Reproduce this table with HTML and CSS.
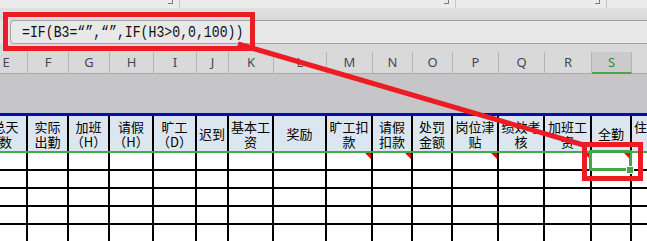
FILE: index.html
```html
<!DOCTYPE html>
<html lang="zh-CN">
<head>
<meta charset="utf-8">
<title>Sheet</title>
<link rel="stylesheet" href="styles.css">
</head>
<body>
<div class="app">
  <div class="toolbar">
    <span class="tb-mark m1"></span><span class="tb-sep"></span>
    <span class="tb-mark m2"></span><span class="tb-sep"></span>
    <span class="tb-mark m3"></span><span class="tb-sep"></span>
  </div>
  <div class="band"></div>
  <div class="fbar">
    <div class="finput"><span class="ftext">=IF(B3=“”,“”,IF(H3&gt;0,0,100))</span></div>
  </div>
  <div class="colhead-wrap">
    <div class="colhead">
      <div class="cl">E</div><div class="cl">F</div><div class="cl">G</div><div class="cl">H</div>
      <div class="cl">I</div><div class="cl">J</div><div class="cl">K</div><div class="cl">L</div>
      <div class="cl">M</div><div class="cl">N</div><div class="cl">O</div><div class="cl">P</div>
      <div class="cl">Q</div><div class="cl">R</div><div class="cl cl-active">S</div><div class="cl">T</div>
    </div>
  </div>
  <div class="graysp"></div>
  <div class="blue"></div>
  <div class="grid head">
    <div class="hc">总天<br>数</div>
    <div class="hc">实际<br>出勤</div>
    <div class="hc">加班<br>（H）</div>
    <div class="hc">请假<br>（H）</div>
    <div class="hc">旷工<br>（D）</div>
    <div class="hc">迟到</div>
    <div class="hc">基本工<br>资</div>
    <div class="hc">奖励</div>
    <div class="hc">旷工扣<br>款</div>
    <div class="hc">请假<br>扣款</div>
    <div class="hc">处罚<br>金额</div>
    <div class="hc">岗位津<br>贴</div>
    <div class="hc">绩效考<br>核</div>
    <div class="hc">加班工<br>资</div>
    <div class="hc">全勤</div>
    <div class="hc">住房补<br>贴</div>
  </div>
  <div class="green"></div>
  <div class="grid data">
    <div class="dc"></div><div class="dc"></div><div class="dc"></div><div class="dc"></div>
    <div class="dc"></div><div class="dc"></div><div class="dc"></div><div class="dc"></div>
    <div class="dc note"></div><div class="dc note"></div><div class="dc"></div><div class="dc note"></div>
    <div class="dc"></div><div class="dc note"></div><div class="dc note sel"><span class="selbox"></span><span class="handle"></span></div><div class="dc"></div>

    <div class="dc"></div><div class="dc"></div><div class="dc"></div><div class="dc"></div>
    <div class="dc"></div><div class="dc"></div><div class="dc"></div><div class="dc"></div>
    <div class="dc"></div><div class="dc"></div><div class="dc"></div><div class="dc"></div>
    <div class="dc"></div><div class="dc"></div><div class="dc"></div><div class="dc"></div>

    <div class="dc"></div><div class="dc"></div><div class="dc"></div><div class="dc"></div>
    <div class="dc"></div><div class="dc"></div><div class="dc"></div><div class="dc"></div>
    <div class="dc"></div><div class="dc"></div><div class="dc"></div><div class="dc"></div>
    <div class="dc"></div><div class="dc"></div><div class="dc"></div><div class="dc"></div>

    <div class="dc"></div><div class="dc"></div><div class="dc"></div><div class="dc"></div>
    <div class="dc"></div><div class="dc"></div><div class="dc"></div><div class="dc"></div>
    <div class="dc"></div><div class="dc"></div><div class="dc"></div><div class="dc"></div>
    <div class="dc"></div><div class="dc"></div><div class="dc"></div><div class="dc"></div>

    <div class="dc"></div><div class="dc"></div><div class="dc"></div><div class="dc"></div>
    <div class="dc"></div><div class="dc"></div><div class="dc"></div><div class="dc"></div>
    <div class="dc"></div><div class="dc"></div><div class="dc"></div><div class="dc"></div>
    <div class="dc"></div><div class="dc"></div><div class="dc"></div><div class="dc"></div>
  </div>

  <svg class="annot" width="647" height="241" viewBox="0 0 647 241" xmlns="http://www.w3.org/2000/svg">
    <rect x="5.5" y="14.5" width="247" height="34" fill="none" stroke="#ed1c24" stroke-width="5"/>
    <line x1="238" y1="44" x2="587" y2="146" stroke="#ed1c24" stroke-width="5"/>
    <rect x="584.5" y="144.5" width="56" height="34" fill="none" stroke="#ed1c24" stroke-width="5"/>
  </svg>
</div>
</body>
</html>
```

FILE: styles.css
```css
* { box-sizing: border-box; }
html, body {
  margin: 0;
  padding: 0;
  width: 647px;
  height: 241px;
  overflow: hidden;
  background: #ffffff;
}
.app {
  position: relative;
  width: 647px;
  height: 241px;
  overflow: hidden;
}

/* toolbar strip */
.toolbar {
  height: 8px;
  background: #ececec;
  display: flex;
  align-items: flex-start;
}
.tb-mark {
  width: 5px;
  height: 4px;
  border-right: 1px solid #7c7c7c;
  border-bottom: 1px solid #7c7c7c;
}
.tb-sep {
  width: 1px;
  height: 8px;
  background: #c6c6c6;
  margin-left: 6px;
}
.m1 { margin-left: 168px; }
.m2 { margin-left: 264px; }
.m3 { margin-left: 139px; }

.band {
  height: 12px;
  background: linear-gradient(#e0e0e0, #d9d9d9);
}

/* formula bar */
.fbar {
  height: 24px;
  background: #e6e6e6;
  display: flex;
}
.finput {
  margin-left: 10px;
  flex: 1;
  height: 24px;
  border: 1px solid #a2a2a2;
  border-right: none;
  border-radius: 4px 0 0 4px;
  background: #e8e8e8;
  padding-left: 11px;
  overflow: hidden;
}
.ftext {
  display: inline-block;
  font-family: "Liberation Mono", monospace;
  font-size: 17px;
  line-height: 22px;
  padding-top: 1px;
  color: #111;
  white-space: nowrap;
  transform: scaleX(0.775);
  transform-origin: left center;
}

/* column letters */
.colhead-wrap {
  height: 30px;
  background: #d9d9d9;
  border-bottom: 1px solid #a9a9a9;
  padding-top: 8px;
}
.colhead {
  margin-left: -15px;
  display: grid;
  grid-template-columns: 43px 41px 41px 44px 43px 32px 45px 53px 46px 40px 40px 46px 46px 47px 40px 45px;
  height: 21px;
}
.cl {
  border-right: 1px solid #b4b4b4;
  text-align: center;
  font-family: "Noto Sans", "Open Sans", sans-serif;
  font-size: 13px;
  line-height: 20px;
  color: #3d4a5a;
}
.cl-active {
  background: #cbcbcb;
  border-bottom: 2px solid #43a647;
  color: #2f8a3a;
}

.graysp {
  height: 39px;
  background: #c6c5c7;
}
.blue {
  height: 3px;
  background: #0b0bb0;
}

/* sheet grid */
.grid {
  margin-left: -15px;
  display: grid;
  grid-template-columns: 41px 39px 39px 42px 41px 30px 43px 51px 44px 38px 38px 44px 44px 45px 38px 43px;
  column-gap: 2px;
  background: #000;
  width: 690px;
}
.head {
  height: 35px;
}
.hc {
  background: #dce6f1;
  display: flex;
  align-items: center;
  justify-content: center;
  text-align: center;
  font-family: "Noto Sans CJK SC", "Noto Sans", sans-serif;
  font-size: 13px;
  line-height: 15px;
  color: #000;
  white-space: nowrap;
  overflow: hidden;
}
.green {
  height: 2px;
  background: #3fae49;
}
.data {
  grid-auto-rows: 16px;
  row-gap: 2px;
}
.dc {
  background: #fff;
  position: relative;
}
.note::after {
  content: "";
  position: absolute;
  top: 0;
  right: 0;
  border-left: 6px solid transparent;
  border-top: 6px solid #ff0000;
}
.sel { z-index: 2; }
.selbox {
  position: absolute;
  left: -3px;
  top: -3px;
  right: -2px;
  bottom: -2px;
  border: 3px solid #43a647;
}
.handle {
  position: absolute;
  right: -4px;
  bottom: -5px;
  width: 8px;
  height: 8px;
  background: #43a647;
  border: 1px solid #fff;
}

.annot {
  position: absolute;
  left: 0;
  top: 0;
  pointer-events: none;
  z-index: 5;
}
```
